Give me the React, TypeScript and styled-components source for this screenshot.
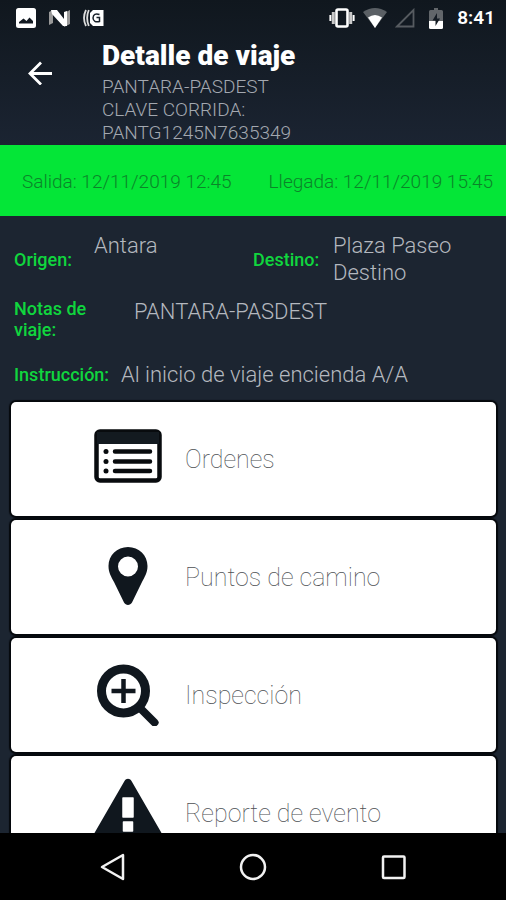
import React from "react";
import styled, { createGlobalStyle } from "styled-components";

const GlobalStyle = createGlobalStyle`
  * { box-sizing: border-box; }
  html, body { margin: 0; background: #000; }
  button { border: 0; padding: 0; background: none; color: inherit; font: inherit; cursor: pointer; }
  svg { display: block; flex: none; }
`;

const Screen = styled.div`
  display: flex;
  flex-direction: column;
  height: 100vh;
  overflow: hidden;
  background: #1c2531;
  color: #b4b8bf;
  font-family: Roboto, "Liberation Sans", sans-serif;
`;

const TopArea = styled.div`
  flex: none;
  background: linear-gradient(#10171e, #1b2432);
`;

const StatusBar = styled.div`
  display: flex;
  align-items: center;
  justify-content: space-between;
  height: 36px;
  padding: 0 11px 0 16px;
  color: #fff;
`;

const StatusGroup = styled.div<{ $gap: number }>`
  display: flex;
  align-items: center;
  gap: ${(p) => p.$gap}px;
`;

const Clock = styled.time`
  font-size: 19px;
  font-weight: 600;
  line-height: 24px;
`;

const Header = styled.header`
  display: grid;
  grid-template-columns: 102px 1fr;
  padding-bottom: 1px;
`;

const BackButton = styled.button`
  && { color: #fff; padding: 25px 24px 24px 28px; }
  align-self: start;
  justify-self: start;
`;

const Title = styled.h1`
  margin: 0;
  color: #fff;
  font-size: 28px;
  font-weight: 900;
  line-height: 39px;
`;

const Subtitle = styled.p`
  margin: 0;
  color: #a3a8b0;
  font-size: 19px;
  font-weight: 300;
  line-height: 23px;
`;

const Schedule = styled.section`
  display: flex;
  flex: none;
  align-items: center;
  justify-content: space-between;
  height: 71px;
  padding: 2px 13px 0 22px;
  background: #04e637;
  color: #0b8429;
  font-size: 19px;
  font-weight: 300;
  line-height: 24px;
  white-space: nowrap;
`;

const Details = styled.dl`
  display: flex;
  flex: none;
  flex-direction: column;
  margin: 0;
  padding: 16px 14px 0;
`;

const Pair = styled.div`
  display: grid;
  grid-template-columns: 1fr 1fr;
`;

const Field = styled.div<{ $label: number; $center?: boolean; $top?: number }>`
  display: grid;
  grid-template-columns: ${(p) => p.$label}px 1fr;
  align-items: ${(p) => (p.$center ? "center" : "start")};
  padding-top: ${(p) => p.$top ?? 0}px;
`;

const Label = styled.dt`
  color: #10d63e;
  font-size: 18px;
  font-weight: 500;
  line-height: 21px;
`;

const Value = styled.dd`
  align-self: start;
  margin: 0;
  font-size: 22px;
  font-weight: 300;
  line-height: 27px;
`;

const Menu = styled.main`
  display: flex;
  flex: 1;
  flex-direction: column;
  gap: 4px;
  min-height: 0;
  overflow: hidden;
  padding: 14px 10px 0 11px;
`;

const MenuCard = styled.button`
  && { background: #fff; color: #4c4f53; padding: 0 16px 0 83px; }
  display: grid;
  flex: none;
  grid-template-columns: 68px 1fr;
  column-gap: 23px;
  align-items: center;
  height: 114px;
  border-radius: 5px;
  box-shadow: 0 0 1px 2px #05080c;
  text-align: left;
`;

const IconSlot = styled.span`
  display: flex;
  justify-content: center;
`;

const CardText = styled.span`
  padding-top: 2px;
  font-size: 25px;
  font-weight: 100;
  line-height: 32px;
`;

const NavBar = styled.nav`
  display: flex;
  flex: none;
  align-items: center;
  justify-content: center;
  gap: 112px;
  height: 67px;
  background: #000;
  color: #f2f2f2;
`;

const PictureIcon = () => (
  <svg width="20" height="20" viewBox="0 0 20 20" aria-hidden="true">
    <path fill="#fff" fillRule="evenodd" d="M2.500 0h15A2.500 2.500 0 0 1 20 2.500v15a2.500 2.500 0 0 1-2.500 2.500h-15A2.500 2.500 0 0 1 0 17.500v-15A2.500 2.500 0 0 1 2.500 0ZM3 15.500h14V13l-3.500-3.500-3 3.500L7.500 10.500 3 14Z" />
  </svg>
);

const NougatIcon = () => (
  <svg width="21" height="18" viewBox="0 0 21 18" aria-hidden="true">
    <path fill="#999" d="M0 3 4 1v13l-4 2ZM15 4l6-3v14l-6 3Z" />
    <path fill="#fff" d="M2 1h6l7 9V3l3-1v15h-4L3 5Z" />
  </svg>
);

const CastIcon = () => (
  <svg width="21" height="18" viewBox="0 0 21 18" aria-hidden="true">
    <path fill="none" stroke="#ddd" strokeWidth="1.800" d="M3 1Q-1 9 3 17M5.800 1Q2.500 9 5.800 17" />
    <path fill="#fff" d="M10 1h10.500v16H10L7 14V4Z" />
    <path fill="none" stroke="#182029" strokeWidth="1.500" d="M16.500 5.500q-6-2-6.500 3.500 .5 5 6.500 3.500V8.500h-3" />
  </svg>
);

const VibrateIcon = () => (
  <svg width="26" height="20" viewBox="0 0 26 20" aria-hidden="true">
    <rect x="7.500" y="1.500" width="11" height="17" rx="1.500" fill="none" stroke="#fff" strokeWidth="2.600" />
    <path stroke="#c9c9c9" strokeWidth="3" d="M4.300 4v12M21.700 4v12" />
    <path stroke="#fff" strokeWidth="2" d="M1.400 7v6M24.600 7v6" />
  </svg>
);

const WifiIcon = () => (
  <svg width="24" height="20" viewBox="0 0 24 20" aria-hidden="true">
    <path fill="#5b6065" d="M0 4Q12-4 24 4L12 20Z" />
    <path fill="#fff" d="M5 9.500q7-5 14 0L12 20Z" />
  </svg>
);

const SignalIcon = () => (
  <svg width="20" height="20" viewBox="0 0 20 20" aria-hidden="true">
    <path fill="none" stroke="#565b60" strokeWidth="1.800" d="M2 18.500 18.500 2v16.500Z" />
  </svg>
);

const BatteryIcon = () => (
  <svg width="14" height="21" viewBox="0 0 14 21" aria-hidden="true">
    <path fill="#62666a" d="M5 0h4v2h3.500Q14 2 14 3.500V13H0V3.500Q0 2 1.500 2H5Z" />
    <path fill="#fff" d="M0 13h14v6.500q0 1.500-1.500 1.500h-11Q0 21 0 19.500Z" />
    <path fill="#151c24" d="M8 5 3.500 12.500h3V18L11 10.500H8Z" />
  </svg>
);

const BackIcon = () => (
  <svg width="24" height="24" viewBox="0 0 24 24" aria-hidden="true">
    <path fill="none" stroke="currentColor" strokeWidth="2.800" d="M24 12.500H3M13 1.500 2 12.500l11 11" />
  </svg>
);

const OrdersIcon = () => (
  <svg width="68" height="60" viewBox="0 0 68 60" aria-hidden="true">
    <rect x="2.500" y="2.500" width="63" height="49" rx="3.500" fill="#fff" stroke="#080b0e" strokeWidth="4.500" />
    <path fill="#131a20" d="M3 3h62v12H3Z" />
    <g fill="#080b0e">
      <circle cx="12" cy="22.500" r="2.500" />
      <circle cx="12" cy="32.500" r="2.500" />
      <circle cx="12" cy="42" r="2.500" />
    </g>
    <path stroke="#080b0e" strokeWidth="4.500" strokeLinecap="round" d="M21 22.500h35M21 32.500h35M21 42h35" />
  </svg>
);

const PinIcon = () => (
  <svg width="40" height="62" viewBox="0 0 40 62" aria-hidden="true">
    <path fill="#10171e" fillRule="evenodd" d="M20 1C9 1 .5 9.500 .5 20 .5 27 3.500 31 6 36l10 20.500c1.800 3.200 6.200 3.200 8 0L34 36c2.500-5 5.500-9 5.500-16C39.500 9.500 31 1 20 1Zm0 9.500a10 10 0 1 1 0 20 10 10 0 0 1 0-20Z" />
  </svg>
);

const InspectIcon = () => (
  <svg width="64" height="62" viewBox="0 1 64 62" aria-hidden="true">
    <g fill="none" stroke="#10171e" strokeLinecap="round">
      <circle cx="27.500" cy="28" r="22" strokeWidth="9" />
      <path strokeWidth="8" d="m45 46 13.500 13.500" />
      <path strokeWidth="4.500" strokeLinecap="butt" d="M27.500 16v24M15.500 28h24" />
    </g>
  </svg>
);

const AlertIcon = () => (
  <svg width="76" height="70" viewBox="0 0 76 70" aria-hidden="true">
    <path fill="#10171e" d="M34.500 3c1.700-3 5.300-3 7 0L75 61c1.500 3 0 6-4 6H5c-4 0-5.500-3-4-6Z" />
    <path fill="#fff" stroke="#fff" strokeWidth="1.500" strokeLinejoin="round" d="M33 20h10v19H33ZM33.500 44h9v9h-9Z" />
  </svg>
);

const NavBackIcon = () => (
  <svg width="28" height="28" viewBox="0 0 28 28" aria-hidden="true">
    <path fill="none" stroke="currentColor" strokeWidth="2.500" strokeLinejoin="round" d="M24 2v24L3 14Z" />
  </svg>
);

const NavHomeIcon = () => (
  <svg width="28" height="28" viewBox="0 0 28 28" aria-hidden="true">
    <circle cx="14" cy="14" r="12" fill="none" stroke="currentColor" strokeWidth="2.500" />
  </svg>
);

const NavRecentsIcon = () => (
  <svg width="28" height="28" viewBox="0 0 28 28" aria-hidden="true">
    <rect x="4" y="3.500" width="21.500" height="21.500" rx="1" fill="none" stroke="currentColor" strokeWidth="2.500" />
  </svg>
);

const menuItems = [
  { text: "Ordenes", Icon: OrdersIcon },
  { text: "Puntos de camino", Icon: PinIcon },
  { text: "Inspección", Icon: InspectIcon },
  { text: "Reporte de evento", Icon: AlertIcon },
];

export default function App() {
  return (
    <>
      <GlobalStyle />
      <Screen>
        <TopArea>
          <StatusBar>
            <StatusGroup $gap={13}>
              <PictureIcon />
              <NougatIcon />
              <CastIcon />
            </StatusGroup>
            <StatusGroup $gap={14}>
              <StatusGroup $gap={8}>
                <VibrateIcon />
                <WifiIcon />
                <SignalIcon />
              </StatusGroup>
              <BatteryIcon />
              <Clock>8:41</Clock>
            </StatusGroup>
          </StatusBar>
          <Header>
            <BackButton type="button" aria-label="Volver">
              <BackIcon />
            </BackButton>
            <div>
              <Title>Detalle de viaje</Title>
              <Subtitle>PANTARA-PASDEST</Subtitle>
              <Subtitle>CLAVE CORRIDA:</Subtitle>
              <Subtitle>PANTG1245N7635349</Subtitle>
            </div>
          </Header>
        </TopArea>
        <Schedule>
          <span>Salida: 12/11/2019 12:45</span>
          <span>Llegada: 12/11/2019 15:45</span>
        </Schedule>
        <Details>
          <Pair>
            <Field $label={80} $center>
              <Label>Origen:</Label>
              <Value>Antara</Value>
            </Field>
            <Field $label={80} $center>
              <Label>Destino:</Label>
              <Value>
                Plaza Paseo
                <br />
                Destino
              </Value>
            </Field>
          </Pair>
          <Field $label={120} $top={12}>
            <Label>
              Notas de
              <br />
              viaje:
            </Label>
            <Value>PANTARA-PASDEST</Value>
          </Field>
          <Field $label={107} $center $top={21}>
            <Label>Instrucción:</Label>
            <Value>Al inicio de viaje encienda A/A</Value>
          </Field>
        </Details>
        <Menu>
          {menuItems.map(({ text, Icon }) => (
            <MenuCard key={text} type="button">
              <IconSlot>
                <Icon />
              </IconSlot>
              <CardText>{text}</CardText>
            </MenuCard>
          ))}
        </Menu>
        <NavBar aria-label="Sistema">
          <button type="button" aria-label="Atrás">
            <NavBackIcon />
          </button>
          <button type="button" aria-label="Inicio">
            <NavHomeIcon />
          </button>
          <button type="button" aria-label="Recientes">
            <NavRecentsIcon />
          </button>
        </NavBar>
      </Screen>
    </>
  );
}
